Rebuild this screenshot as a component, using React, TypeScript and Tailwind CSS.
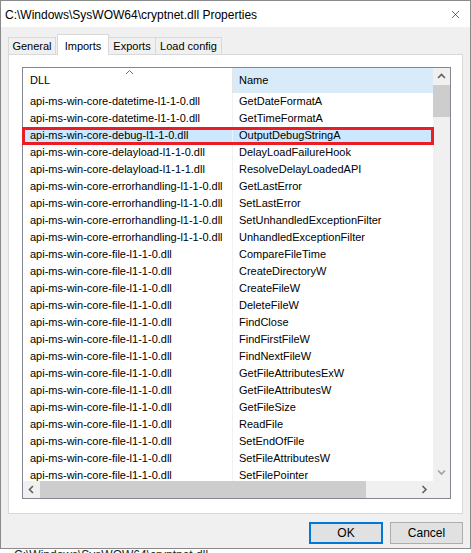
import { X } from 'lucide-react'

const rows: [string, string][] = [
  ['api-ms-win-core-datetime-l1-1-0.dll', 'GetDateFormatA'],
  ['api-ms-win-core-datetime-l1-1-0.dll', 'GetTimeFormatA'],
  ['api-ms-win-core-debug-l1-1-0.dll', 'OutputDebugStringA'],
  ['api-ms-win-core-delayload-l1-1-0.dll', 'DelayLoadFailureHook'],
  ['api-ms-win-core-delayload-l1-1-1.dll', 'ResolveDelayLoadedAPI'],
  ['api-ms-win-core-errorhandling-l1-1-0.dll', 'GetLastError'],
  ['api-ms-win-core-errorhandling-l1-1-0.dll', 'SetLastError'],
  ['api-ms-win-core-errorhandling-l1-1-0.dll', 'SetUnhandledExceptionFilter'],
  ['api-ms-win-core-errorhandling-l1-1-0.dll', 'UnhandledExceptionFilter'],
  ['api-ms-win-core-file-l1-1-0.dll', 'CompareFileTime'],
  ['api-ms-win-core-file-l1-1-0.dll', 'CreateDirectoryW'],
  ['api-ms-win-core-file-l1-1-0.dll', 'CreateFileW'],
  ['api-ms-win-core-file-l1-1-0.dll', 'DeleteFileW'],
  ['api-ms-win-core-file-l1-1-0.dll', 'FindClose'],
  ['api-ms-win-core-file-l1-1-0.dll', 'FindFirstFileW'],
  ['api-ms-win-core-file-l1-1-0.dll', 'FindNextFileW'],
  ['api-ms-win-core-file-l1-1-0.dll', 'GetFileAttributesExW'],
  ['api-ms-win-core-file-l1-1-0.dll', 'GetFileAttributesW'],
  ['api-ms-win-core-file-l1-1-0.dll', 'GetFileSize'],
  ['api-ms-win-core-file-l1-1-0.dll', 'ReadFile'],
  ['api-ms-win-core-file-l1-1-0.dll', 'SetEndOfFile'],
  ['api-ms-win-core-file-l1-1-0.dll', 'SetFileAttributesW'],
  ['api-ms-win-core-file-l1-1-0.dll', 'SetFilePointer'],
]

const Chevron = ({ dir, color = '#606060' }: { dir: 'up' | 'down' | 'left' | 'right'; color?: string }) => {
  const d = {
    up: 'M1 5 L4.5 1.5 L8 5',
    down: 'M1 1.5 L4.5 5 L8 1.5',
    left: 'M5 1 L1.5 4.5 L5 8',
    right: 'M1.5 1 L5 4.5 L1.5 8',
  }[dir]
  const horiz = dir === 'up' || dir === 'down'
  return (
    <svg width={horiz ? 9 : 7} height={horiz ? 7 : 9} viewBox={horiz ? '0 0 9 7' : '0 0 7 9'}>
      <path d={d} fill="none" stroke={color} strokeWidth="1.6" />
    </svg>
  )
}

const App = () => {
  return (
    <div className="w-[471px] h-[553px] overflow-hidden bg-white font-['Liberation_Sans',Arial,sans-serif] text-black">
      <div className="h-[549px] border border-[#8a8a8a] flex flex-col">
        {/* Title bar */}
        <div className="h-[26px] bg-white flex items-center pl-[4px] pr-[8px] justify-between">
          <span className="text-[12px] leading-none pt-[1px]">C:\Windows\SysWOW64\cryptnet.dll Properties</span>
          <X className="w-[13px] h-[13px] text-[#222]" strokeWidth={1.2} />
        </div>

        {/* Body */}
        <div className="flex-1 bg-[#f0f0f0] px-[7px] pt-[7px] text-[11px]">
          {/* Tabs */}
          <div className="flex items-end h-[20px]">
            <div className="w-[48px] h-[17px] border border-b-0 border-[#d9d9d9] flex items-center justify-center pt-[1px]">General</div>
            <div className="relative z-10 ml-[1px] w-[52px] h-[21px] -mb-px bg-white border border-b-0 border-[#d9d9d9] flex items-start justify-center pt-[3px]">Imports</div>
            <div className="w-[48px] h-[17px] -ml-px border border-b-0 border-[#d9d9d9] flex items-center justify-center pt-[1px]">Exports</div>
            <div className="w-[67px] h-[17px] -ml-px border border-b-0 border-[#d9d9d9] flex items-center justify-center pt-[1px]">Load config</div>
          </div>

          {/* Panel */}
          <div className="h-[460px] bg-white border border-[#d9d9d9] pt-[12px] pl-[13px]">
            <div className="relative w-[429px] h-[432px] border border-[#828790] grid grid-cols-[410px_17px] grid-rows-[413px_17px]">
              {/* List area */}
              <div className="overflow-hidden">
                <div className="flex h-[25px] items-center">
                  <div className="relative w-[210px] h-full flex items-center pl-[7px] border-r border-[#e5e5e5]">
                    DLL
                    <span className="absolute left-[102px] top-[1px]">
                      <svg width="9" height="6" viewBox="0 0 9 6">
                        <path d="M1 5 L4.5 1.5 L8 5" fill="none" stroke="#707070" strokeWidth="1" />
                      </svg>
                    </span>
                  </div>
                  <div className="flex-1 h-full bg-[#d9ebf9] flex items-center pl-[6px]">Name</div>
                </div>
                {rows.map(([dll, name], i) => (
                  <div key={i} className={`flex h-[17px] items-center ${i === 2 ? 'bg-[#cce8ff]' : ''}`}>
                    <div className="w-[210px] pl-[7px] whitespace-nowrap overflow-hidden border-r border-[#eef3f8] h-full flex items-center">{dll}</div>
                    <div className="flex-1 pl-[6px] whitespace-nowrap">{name}</div>
                  </div>
                ))}
              </div>

              {/* Vertical scrollbar */}
              <div className="bg-[#f0f0f0] flex flex-col">
                <div className="h-[17px] flex items-center justify-center">
                  <Chevron dir="up" />
                </div>
                <div className="h-[32px] bg-[#cdcdcd]" />
                <div className="flex-1" />
                <div className="h-[17px] flex items-center justify-center">
                  <Chevron dir="down" color="#a0a0a0" />
                </div>
              </div>

              {/* Horizontal scrollbar */}
              <div className="bg-[#f0f0f0] flex">
                <div className="w-[17px] flex items-center justify-center">
                  <Chevron dir="left" />
                </div>
                <div className="w-[326px] bg-[#cdcdcd]" />
                <div className="flex-1" />
                <div className="w-[17px] flex items-center justify-center">
                  <Chevron dir="right" />
                </div>
              </div>
              <div className="bg-[#f0f0f0]" />

              {/* Highlight box */}
              <div className="absolute left-[-1px] top-[59px] w-[412px] h-[18px] border-[3px] border-[#ec1c24]" />
            </div>
          </div>

          {/* Buttons */}
          <div className="flex justify-end gap-[7px] mt-[8px] pr-[0px] text-[12px]">
            <button className="w-[74px] h-[22px] border-2 border-[#0078d7] bg-[#e1e1e1]">OK</button>
            <button className="w-[73px] h-[22px] border border-[#adadad] bg-[#e1e1e1]">Cancel</button>
          </div>
        </div>
      </div>
      <div className="h-[4px] overflow-hidden pl-[14px]">
        <div className="text-[12px] leading-[12px] text-[#222]">C:\Windows\SysWOW64\cryptnet.dll</div>
      </div>
    </div>
  )
}

export default App
